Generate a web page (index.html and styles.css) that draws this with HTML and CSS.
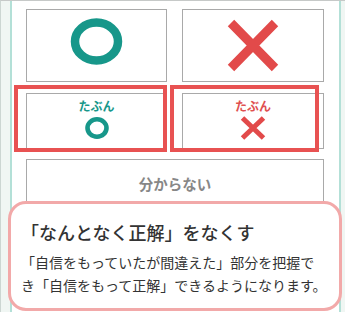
FILE: index.html
```html
<!DOCTYPE html>
<html lang="ja">
<head>
<meta charset="utf-8">
<link rel="stylesheet" href="styles.css">
</head>
<body>
<div class="page">
  <div class="screen">
    <div class="grid">
      <div class="btn big">
        <svg class="big-icon" width="139" height="72" viewBox="0 0 139 72">
          <ellipse cx="69.5" cy="31.5" rx="21.5" ry="19" fill="none" stroke="#17978a" stroke-width="8.5"/>
        </svg>
      </div>
      <div class="btn big">
        <svg class="big-icon" width="140" height="72" viewBox="0 0 140 72">
          <path d="M48 13 L92 58 M92 13 L48 58" stroke="#e24a4a" stroke-width="9" fill="none"/>
        </svg>
      </div>
      <div class="btn maybe maybe-left">
        <span class="label label-teal">たぶん</span>
        <svg class="small-icon" width="24" height="22" viewBox="0 0 24 22">
          <ellipse cx="12" cy="11" rx="9.5" ry="8.7" fill="none" stroke="#17978a" stroke-width="4.6"/>
        </svg>
      </div>
      <div class="btn maybe maybe-right">
        <span class="label label-red">たぶん</span>
        <svg class="small-icon" width="26" height="24" viewBox="0 0 26 24">
          <path d="M2.5 2 L23.5 22 M23.5 2 L2.5 22" stroke="#e24a4a" stroke-width="5" fill="none"/>
        </svg>
      </div>
      <div class="btn dunno">分からない</div>
    </div>
  </div>
  <div class="callout">
    <p class="callout-title">「なんとなく正解」をなくす</p>
    <p class="callout-body">「自信をもっていたが間違えた」部分を把握で<br>き「自信をもって正解」できるようになります。</p>
  </div>
</div>
</body>
</html>
```
FILE: styles.css
```css
*, *::before, *::after { box-sizing: border-box; }
html, body { margin: 0; padding: 0; background: #fff; }
body { font-family: "Noto Sans CJK JP", "Noto Sans", sans-serif; }

.page {
  position: relative;
  width: 345px;
  height: 312px;
  overflow: hidden;
  border-top: 1px solid #c6c9c8;
  border-left: 1px solid #ccd6d2;
  background: #f0f6f3;
}

.screen {
  margin-left: 9px;
  width: 331px;
  height: 100%;
  background: #fff;
  border-left: 2px solid #b3e0d7;
  border-right: 2px solid #b3e0d7;
  padding: 8px 0 0 14px;
}

.grid {
  display: grid;
  grid-template-columns: 141px 142px;
  grid-template-rows: 74px 56px 50px;
  column-gap: 15px;
  row-gap: 10px;
}

.btn {
  position: relative;
  border: 1px solid #a9a9a9;
  background: #fff;
}

.big-icon { display: block; }

.grid .big { margin-bottom: 1px; }

.maybe {
  display: flex;
  flex-direction: column;
  align-items: center;
  padding-top: 4px;
}

.label {
  font-size: 12px;
  line-height: 15px;
  font-weight: 700;
}
.label-teal { color: #17978a; }
.label-red { color: #e05050; }

.small-icon { display: block; margin-top: 4px; }
.maybe-right .small-icon { margin-top: 3px; }

.maybe::after {
  content: "";
  position: absolute;
  top: -9px;
  left: -13px;
  height: 67px;
  border: 4px solid #e85252;
}
.maybe-left::after { width: 153px; }
.maybe-right::after { width: 149px; }

.dunno {
  grid-column: 1 / span 2;
  display: flex;
  justify-content: center;
  padding-top: 14px;
  font-size: 14.5px;
  line-height: 20px;
  font-weight: 700;
  color: #878787;
}

.callout {
  position: absolute;
  left: 7px;
  top: 200px;
  width: 334px;
  height: 110px;
  background: #fff;
  border: 3px solid #f2a9a9;
  border-radius: 18px;
  padding: 16px 0 0 10px;
}

.callout p { margin: 0; }

.callout-title {
  font-size: 18px;
  line-height: 24px;
  font-weight: 500;
  color: #333;
}

.callout-body {
  margin-top: 7px !important;
  font-size: 14px;
  line-height: 22.5px;
  color: #333;
  white-space: nowrap;
}
```
